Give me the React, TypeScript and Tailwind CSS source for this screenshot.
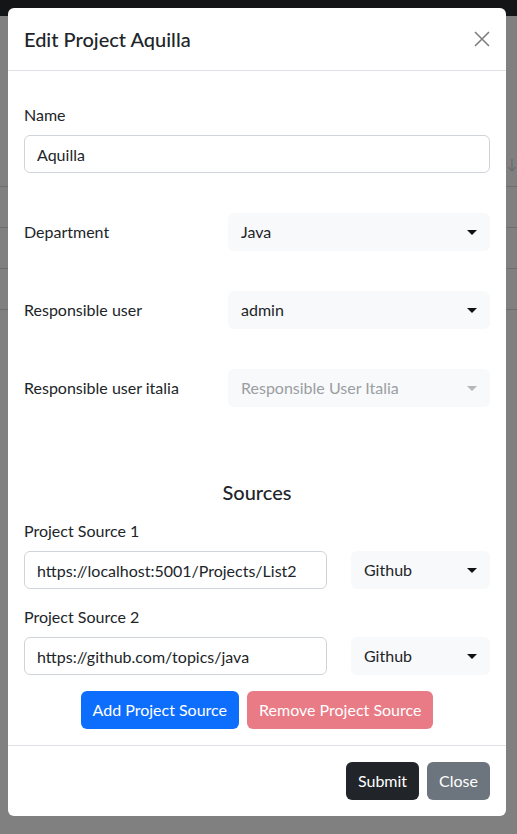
import React from 'react';

const font = { fontFamily: 'Lato, "Noto Sans", sans-serif' };

const Caret = ({ muted = false }: { muted?: boolean }) => (
  <svg width="10" height="5" viewBox="0 0 10 5" className={muted ? 'fill-[#b5b8bb]' : 'fill-[#111]'}>
    <polygon points="0,0 10,0 5,5" />
  </svg>
);

const SelectBox = ({ value, disabled = false }: { value: string; disabled?: boolean }) => (
  <div className="flex h-[38px] items-center justify-between rounded-md bg-[#f8f9fa] pl-[13px] pr-[13px]">
    <span className={disabled ? 'text-[#9a9ea3]' : 'text-[#212529]'}>{value}</span>
    <Caret muted={disabled} />
  </div>
);

const TextBox = ({ value }: { value: string }) => (
  <input
    readOnly
    defaultValue={value}
    className="h-[38px] w-full rounded-md border border-[#ced4da] bg-white px-3 text-[16px] text-[#212529] outline-none"
  />
);

export default function App() {
  return (
    <div className="relative h-[834px] w-[517px] overflow-hidden bg-[#808080] text-[16px] leading-6 text-[#212529]" style={font}>
      {/* dimmed page behind the modal */}
      <div className="h-4 bg-[#141517]" />
      <div className="flex h-[171px] items-end justify-end border-b border-[#6e6e6e] pb-[10px] text-[14px] text-[#6a6a6a]">
        ↑↓
      </div>
      <div className="h-[41px] border-b border-[#6e6e6e]" />
      <div className="h-[41px] border-b border-[#6e6e6e]" />
      <div className="h-[41px] border-b border-[#6e6e6e]" />

      {/* modal */}
      <div className="absolute left-2 top-2 w-[498px] rounded-md bg-white">
        <div className="flex items-center justify-between border-b border-[#dee2e6] p-4">
          <h5 className="text-[20px] font-medium leading-[30px]">Edit Project Aquilla</h5>
          <svg width="16" height="16" viewBox="0 0 16 16" className="stroke-[#7f7f7f]" strokeWidth="1.6">
            <path d="M1 1 L15 15 M15 1 L1 15" />
          </svg>
        </div>

        <div className="p-4">
          <div className="mt-4">
            <label className="mb-2 block">Name</label>
            <TextBox value="Aquilla" />
          </div>

          <div className="mt-10 grid grid-cols-[204px_1fr] items-center">
            <label>Department</label>
            <SelectBox value="Java" />
          </div>
          <div className="mt-10 grid grid-cols-[204px_1fr] items-center">
            <label>Responsible user</label>
            <SelectBox value="admin" />
          </div>
          <div className="mt-10 grid grid-cols-[204px_1fr] items-center">
            <label>Responsible user italia</label>
            <SelectBox value="Responsible User Italia" disabled />
          </div>

          <h5 className="mt-[70px] text-center text-[20px] font-medium leading-[30px]">Sources</h5>

          <div className="mt-3">
            <label className="mb-2 block">Project Source 1</label>
            <div className="grid grid-cols-[303px_1fr] gap-6">
              <TextBox value="https://localhost:5001/Projects/List2" />
              <SelectBox value="Github" />
            </div>
          </div>
          <div className="mt-4">
            <label className="mb-2 block">Project Source 2</label>
            <div className="grid grid-cols-[303px_1fr] gap-6">
              <TextBox value="https://github.com/topics/java" />
              <SelectBox value="Github" />
            </div>
          </div>

          <div className="mt-4 flex justify-center gap-2">
            <button className="h-[38px] rounded-md bg-[#0d6efd] px-3 text-white">Add Project Source</button>
            <button className="h-[38px] rounded-md bg-[#e87b85] px-3 text-white">Remove Project Source</button>
          </div>
        </div>

        <div className="flex justify-end gap-2 border-t border-[#dee2e6] p-4">
          <button className="h-[38px] rounded-md bg-[#212529] px-3 text-white">Submit</button>
          <button className="h-[38px] rounded-md bg-[#6c757d] px-3 text-white">Close</button>
        </div>
      </div>
    </div>
  );
}
